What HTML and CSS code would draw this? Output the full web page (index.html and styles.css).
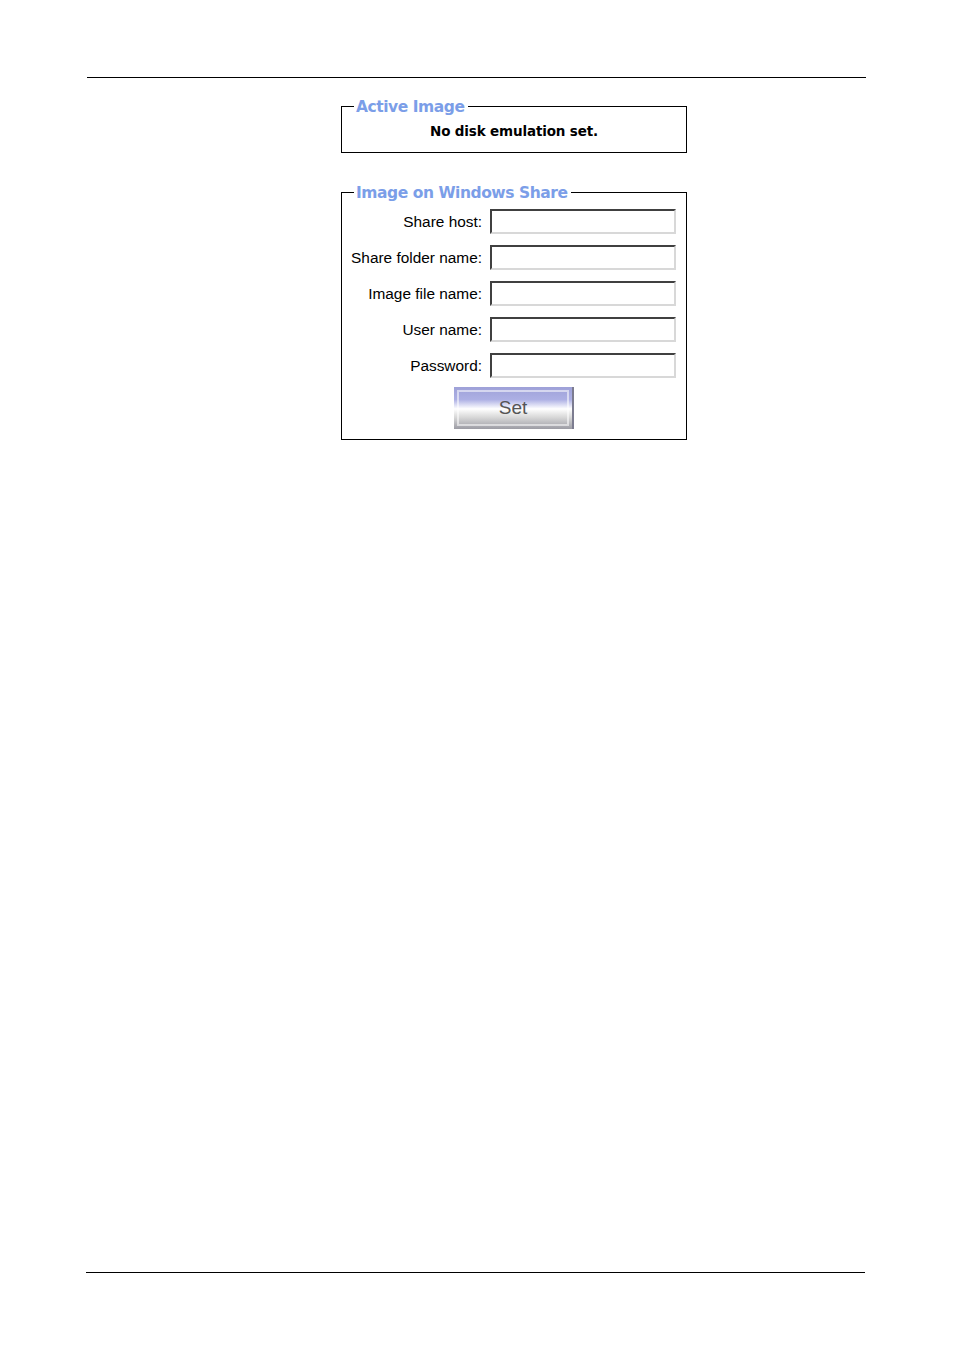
FILE: index.html
```html
<!DOCTYPE html>
<html>
<head>
<meta charset="utf-8">
<link rel="stylesheet" href="styles.css">
</head>
<body>
<div class="page">
  <div class="rule rule-top"></div>
  <fieldset class="box box-active">
    <legend class="legend"><span class="legend-text">Active Image</span></legend>
    <div class="status">No disk emulation set.</div>
  </fieldset>
  <fieldset class="box box-share">
    <legend class="legend"><span class="legend-text">Image on Windows Share</span></legend>
    <div class="form">
      <label class="label">Share host:</label><input class="field" type="text">
      <label class="label">Share folder name:</label><input class="field" type="text">
      <label class="label">Image file name:</label><input class="field" type="text">
      <label class="label">User name:</label><input class="field" type="text">
      <label class="label">Password:</label><input class="field" type="password">
    </div>
    <div class="actions">
      <button class="btn" type="button"><span class="btn-inner">Set</span></button>
    </div>
  </fieldset>
  <div class="spacer"></div>
  <div class="rule rule-bottom"></div>
</div>
</body>
</html>
```
FILE: styles.css
```css
html, body {
  margin: 0;
  padding: 0;
  background: #fff;
}
.page {
  padding-top: 77px;
  height: 1350px;
  box-sizing: border-box;
  display: flex;
  flex-direction: column;
}
.rule {
  height: 1px;
  background: #000;
  width: 779px;
}
.rule-top {
  margin-left: 87px;
}
.rule-bottom {
  margin-left: 86px;
}
.spacer {
  height: 832px;
}
.box {
  margin: 0 0 0 341px;
  width: 346px;
  box-sizing: border-box;
  border: 1px solid #000;
  padding: 0;
  min-width: 0;
}
.box-active {
  margin-top: 18px;
  height: 57px;
}
.box-share {
  margin-top: 29px;
  height: 258px;
}
.legend {
  margin-left: 12px;
  padding: 0 3px 0 2px;
  font-family: "DejaVu Sans", Verdana, sans-serif;
  font-weight: bold;
  font-size: 15.5px;
  line-height: 20px;
  color: #7b9ee8;
  letter-spacing: -0.45px;
}
.legend-text {
  position: relative;
  top: 1px;
}
.status {
  text-align: center;
  font-family: "DejaVu Sans", Verdana, sans-serif;
  font-weight: bold;
  font-size: 13.5px;
  line-height: 18px;
  padding-top: 6px;
  color: #000;
  letter-spacing: -0.15px;
}
.form {
  display: grid;
  grid-template-columns: 140px 186px;
  column-gap: 8px;
  row-gap: 11px;
  padding-top: 7px;
  align-items: center;
}
.label {
  text-align: right;
  font-family: "Liberation Sans", Arial, sans-serif;
  font-size: 15.4px;
  color: #000;
  line-height: 18px;
}
.field {
  width: 186px;
  height: 25px;
  box-sizing: border-box;
  margin: 0;
  padding: 0 3px;
  border-top: 2px solid #404040;
  border-left: 2px solid #404040;
  border-right: 2px solid #d8d8d8;
  border-bottom: 2px solid #d8d8d8;
  background: #fff;
  outline: none;
}
.actions {
  display: flex;
  justify-content: center;
  padding-top: 9px;
}
.btn {
  width: 120px;
  height: 42px;
  margin: 0;
  padding: 3px;
  box-sizing: border-box;
  border: none;
  border-right: 2px solid #7c7c90;
  background: linear-gradient(to bottom, #9ea1d8 0%, #adb0e4 30%, #ffffff 52%, #d8d8d8 72%, #9c9ca4 100%);
  font-family: "Liberation Sans", Arial, sans-serif;
  font-size: 19px;
  color: #555;
  display: flex;
}
.btn-inner {
  flex: 1;
  border: 2px solid rgba(255, 255, 255, 0.55);
  display: flex;
  align-items: center;
  justify-content: center;
}
```
